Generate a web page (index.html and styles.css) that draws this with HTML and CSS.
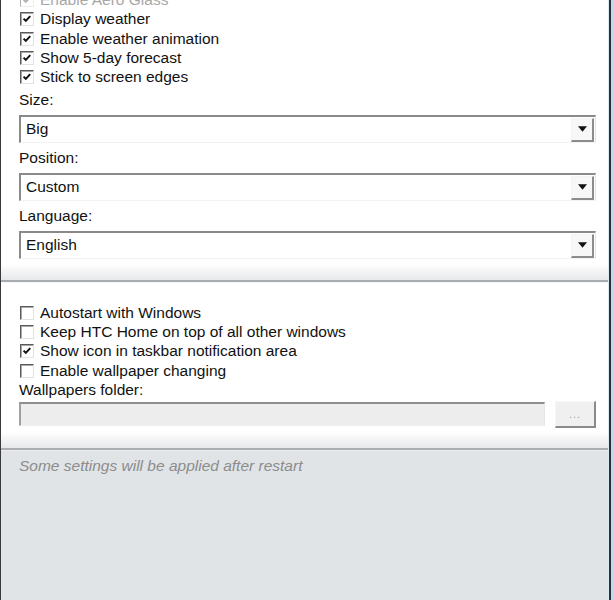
FILE: index.html
```html
<!DOCTYPE html>
<html>
<head>
<meta charset="utf-8">
<link rel="stylesheet" href="styles.css">
</head>
<body>
<div class="window">
  <div class="main">
    <section class="panel panel-top">
      <div class="row row-first disabled"><span class="cb checked"><svg viewBox="0 0 14 14"><path d="M3 6.5 L5.6 9.2 L10.8 3.6"/></svg></span><span>Enable Aero Glass</span></div>
      <div class="row"><span class="cb checked"><svg viewBox="0 0 14 14"><path d="M3 6.5 L5.6 9.2 L10.8 3.6"/></svg></span><span>Display weather</span></div>
      <div class="row"><span class="cb checked"><svg viewBox="0 0 14 14"><path d="M3 6.5 L5.6 9.2 L10.8 3.6"/></svg></span><span>Enable weather animation</span></div>
      <div class="row"><span class="cb checked"><svg viewBox="0 0 14 14"><path d="M3 6.5 L5.6 9.2 L10.8 3.6"/></svg></span><span>Show 5-day forecast</span></div>
      <div class="row"><span class="cb checked"><svg viewBox="0 0 14 14"><path d="M3 6.5 L5.6 9.2 L10.8 3.6"/></svg></span><span>Stick to screen edges</span></div>

      <div class="label label-first">Size:</div>
      <div class="select"><span class="value">Big</span><span class="drop"><svg viewBox="0 0 8 5"><path d="M0 0 H8 L4 5 Z"/></svg></span></div>
      <div class="label">Position:</div>
      <div class="select"><span class="value">Custom</span><span class="drop"><svg viewBox="0 0 8 5"><path d="M0 0 H8 L4 5 Z"/></svg></span></div>
      <div class="label">Language:</div>
      <div class="select"><span class="value">English</span><span class="drop"><svg viewBox="0 0 8 5"><path d="M0 0 H8 L4 5 Z"/></svg></span></div>
    </section>
    <div class="sep"></div>
    <section class="panel panel-bottom">
      <div class="row"><span class="cb"></span><span>Autostart with Windows</span></div>
      <div class="row"><span class="cb"></span><span>Keep HTC Home on top of all other windows</span></div>
      <div class="row"><span class="cb checked"><svg viewBox="0 0 14 14"><path d="M3 6.5 L5.6 9.2 L10.8 3.6"/></svg></span><span>Show icon in taskbar notification area</span></div>
      <div class="row"><span class="cb"></span><span>Enable wallpaper changing</span></div>
      <div class="row">Wallpapers folder:</div>
      <div class="folder">
        <div class="input"></div>
        <div class="browse">...</div>
      </div>
    </section>
    <div class="sep sep2"></div>
    <footer class="footer">Some settings will be applied after restart</footer>
  </div>
  <div class="frame-right"></div>
</div>
</body>
</html>
```
FILE: styles.css
```css
html, body {
  margin: 0;
  padding: 0;
  height: 100%;
  overflow: hidden;
}
body {
  font-family: "Liberation Sans", Arial, sans-serif;
  font-size: 15.5px;
  color: #111;
  background: #e1e4e7;
}
.window {
  display: flex;
  height: 600px;
  width: 614px;
  border-left: 1px solid #3a3a3a;
  box-sizing: border-box;
}
.main {
  flex: 1;
  display: flex;
  flex-direction: column;
  min-width: 0;
}
.frame-right {
  width: 6px;
  background: linear-gradient(to right, #dde7f0 0 1px, #24323f 1px 3px, #c2d7eb 3px 6px);
}
.panel {
  padding: 0 12px 0 18px;
  background: linear-gradient(to bottom, #ffffff calc(100% - 16px), #e6e8ea 100%);
}
.panel-top {
  padding-bottom: 21px;
}
.panel-bottom {
  padding-top: 20px;
  padding-bottom: 20px;
}
.row {
  display: flex;
  align-items: center;
  height: 19.33px;
  white-space: nowrap;
}
.row-first {
  margin-top: -9.67px;
}
.disabled {
  color: #a8a8a8;
}
.cb {
  width: 14px;
  height: 14px;
  box-sizing: border-box;
  margin-left: 1px;
  margin-right: 6px;
  background: #fff;
  border-style: solid;
  border-width: 1px;
  border-color: #5a5a5a #e2e2e2 #e2e2e2 #5a5a5a;
  box-shadow: inset 1px 1px 0 #a8a8a8;
  display: flex;
  flex: none;
}
.cb svg {
  width: 12px;
  height: 12px;
  fill: none;
  stroke: #111;
  stroke-width: 2.3;
}
.disabled .cb {
  border-color: #b0b0b0 #ececec #ececec #b0b0b0;
  box-shadow: none;
}
.disabled .cb svg {
  stroke: #b0b0b0;
}
.label {
  height: 19px;
  line-height: 19px;
  margin-top: 5px;
}
.label-first {
  margin-top: 3px;
}
.select {
  margin-top: 6px;
  height: 28px;
  box-sizing: border-box;
  display: flex;
  align-items: stretch;
  border-style: solid;
  border-width: 2px 1px 1px 2px;
  border-color: #8a8a8a #e4e4e4 #f2f2f2 #8a8a8a;
  background: #fff;
}
.select .value {
  flex: 1;
  display: flex;
  align-items: center;
  padding-left: 5px;
}
.select .drop {
  width: 23px;
  margin: 1px 1px 0 0;
  box-sizing: border-box;
  border-style: solid;
  border-width: 1px 2px 2px 1px;
  border-color: #f4f4f4 #8c8c8c #8c8c8c #f4f4f4;
  background: #f7f7f7;
  display: flex;
  align-items: center;
  justify-content: center;
}
.select .drop svg {
  width: 9px;
  height: 6px;
  fill: #111;
}
.folder {
  display: flex;
  align-items: flex-start;
  gap: 10px;
  margin-top: 1px;
}
.input {
  flex: 1;
  height: 24px;
  margin-top: 1px;
  box-sizing: border-box;
  border-style: solid;
  border-width: 2px 1px 1px 2px;
  border-color: #8e8e8e #e6e6e6 #f0f0f0 #a0a0a0;
  background: #ededed;
}
.browse {
  width: 41px;
  height: 27px;
  box-sizing: border-box;
  border-style: solid;
  border-width: 1px 2px 2px 1px;
  border-color: #f6f6f6 #8a8a8a #8a8a8a #f6f6f6;
  background: #f0f0f0;
  color: #a0a0a0;
  font-size: 11px;
  display: flex;
  align-items: center;
  justify-content: center;
  letter-spacing: 1px;
}
.sep {
  height: 2px;
  background: #a9adb1;
  border-bottom: 1px solid #f4f5f6;
}
.sep2 {
  border-bottom-color: #eceef0;
}
.footer {
  flex: 1;
  background: #e1e4e7;
  padding: 5px 0 0 18px;
  line-height: 19px;
  font-style: italic;
  color: #8c8c8c;
}
```
